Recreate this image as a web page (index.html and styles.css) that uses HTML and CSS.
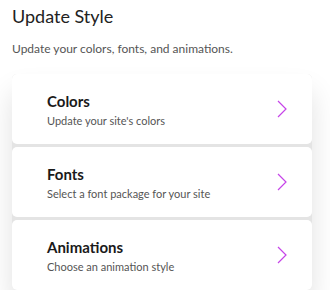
FILE: index.html
```html
<!DOCTYPE html>
<html lang="en">
<head>
  <meta charset="UTF-8" />
  <meta name="viewport" content="width=device-width, initial-scale=1" />
  <title>Update Style</title>
  <link rel="stylesheet" href="styles.css">
</head>
<body>

  <h1 class="page-title">Update Style</h1>
  <p class="page-lead">Update your colors, fonts, and animations.</p>

  <div class="option-list">
    <a class="option-card" href="#colors">
      <div class="option-text">
        <div class="option-name">Colors</div>
        <div class="option-desc">Update your site's colors</div>
      </div>
      <svg class="chevron" viewBox="0 0 10 18" width="10" height="18" aria-hidden="true">
        <path d="M1 1 L9 9 L1 17" fill="none" stroke="#c644e8" stroke-width="1.2" />
      </svg>
    </a>
    <a class="option-card" href="#fonts">
      <div class="option-text">
        <div class="option-name">Fonts</div>
        <div class="option-desc">Select a font package for your site</div>
      </div>
      <svg class="chevron" viewBox="0 0 10 18" width="10" height="18" aria-hidden="true">
        <path d="M1 1 L9 9 L1 17" fill="none" stroke="#c644e8" stroke-width="1.2" />
      </svg>
    </a>
    <a class="option-card" href="#animations">
      <div class="option-text">
        <div class="option-name">Animations</div>
        <div class="option-desc">Choose an animation style</div>
      </div>
      <svg class="chevron" viewBox="0 0 10 18" width="10" height="18" aria-hidden="true">
        <path d="M1 1 L9 9 L1 17" fill="none" stroke="#c644e8" stroke-width="1.2" />
      </svg>
    </a>
  </div>

</body>
</html>
```

FILE: styles.css
```css
body {
  margin: 0;
  padding: 4px 18px 0 12px;
  background: #fff;
  font-family: 'Lato', 'Open Sans', sans-serif;
  color: #222;
}

.page-title {
  margin: 0;
  font-size: 18px;
  font-weight: 400;
  line-height: 24px;
  color: #222;
}

.page-lead {
  margin: 13px 0 0;
  font-size: 12px;
  line-height: 16px;
  color: #555;
}

/* cards sit in a block with one soft shadow around it */
.option-list {
  margin-top: 17px;
  display: flex;
  flex-direction: column;
  gap: 3px;
  background: #e4e4e4;
  border-radius: 5px;
  box-shadow: 0 18px 28px rgba(0, 0, 0, 0.12);
}

.option-card {
  display: flex;
  align-items: center;
  justify-content: space-between;
  height: 70px;
  padding: 0 25px 0 35px;
  background: #fff;
  border-radius: 5px;
  text-decoration: none;
  color: inherit;
}

.option-name {
  font-size: 15px;
  font-weight: 700;
  line-height: 20px;
  color: #1a1a1a;
}

.option-desc {
  margin-top: 3px;
  font-size: 11px;
  line-height: 14px;
  color: #555;
}

.chevron {
  display: block;
}
```
